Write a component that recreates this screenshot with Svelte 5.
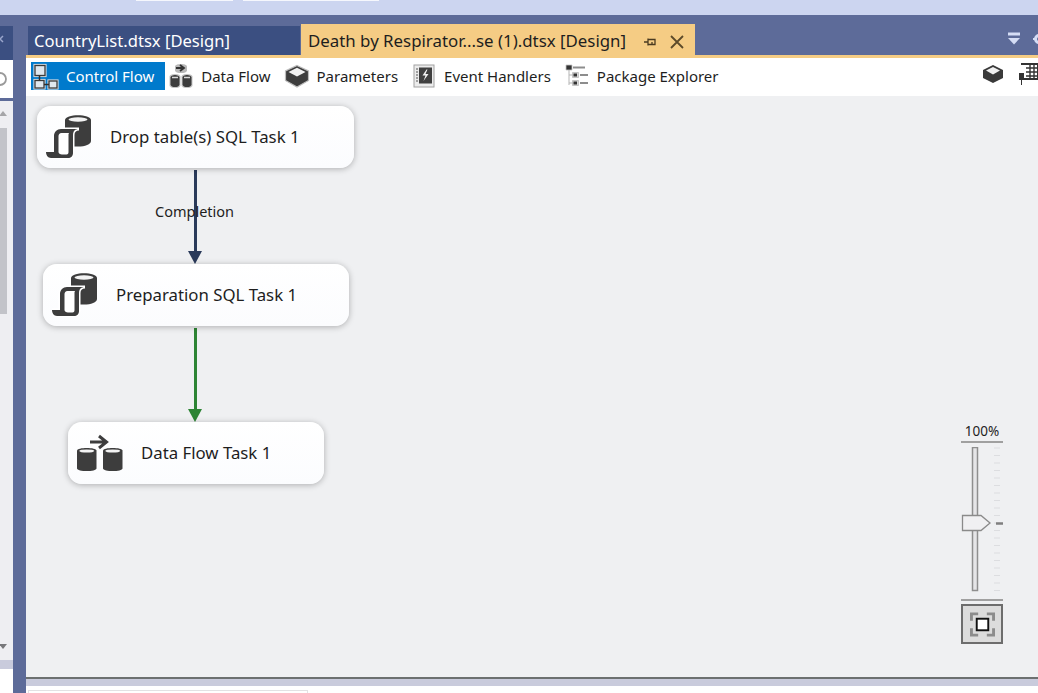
<script>
  const tabs = [
    { label: 'Control Flow', icon: 'control', active: true },
    { label: 'Data Flow', icon: 'data' },
    { label: 'Parameters', icon: 'param' },
    { label: 'Event Handlers', icon: 'event' },
    { label: 'Package Explorer', icon: 'explorer' }
  ];
  const nodes = [
    { label: 'Drop table(s) SQL Task 1', kind: 'sql', x: 37, y: 106, w: 317, text: 73 },
    { label: 'Preparation SQL Task 1', kind: 'sql', x: 43, y: 264, w: 306, text: 73 },
    { label: 'Data Flow Task 1', kind: 'flow', x: 68, y: 422, w: 256, text: 73 }
  ];
  const ticks = Array.from({ length: 20 }, (_, i) => 1 + i * 7.5);
</script>

{#snippet drum(x, y, w, h, fill)}
  <path d="M{x} {y + 2.5}c0-3.4 {w}-3.4 {w} 0v{h - 5}c0 3.4-{w} 3.4-{w} 0z" fill={fill} />
{/snippet}

{#snippet tabIcon(icon)}
  {#if icon === 'control'}
    <svg width="28" height="27" viewBox="0 0 28 27">
      <g fill="none" stroke="#d9dde2" stroke-width="3.2">
        <rect x="3" y="2.500" width="10" height="10" />
        <rect x="3" y="17.500" width="9" height="7.500" />
        <rect x="17" y="18" width="8" height="7" />
      </g>
      <g fill="#dfe7ee" stroke="#3a3a3a" stroke-width="1.300">
        <rect x="3" y="2.500" width="10" height="10" />
        <rect x="3" y="17.500" width="9" height="7.500" />
        <rect x="17" y="18" width="8" height="7" />
      </g>
      <path d="M7.500 12.500v5M12 21.500h5" stroke="#2f2f2f" stroke-width="1.500" />
    </svg>
  {:else if icon === 'data'}
    <svg width="26" height="26" viewBox="0 0 26 26">
      {@render drum(7, 1, 12, 9, '#b9b9b9')}
      <path d="M8 5h7M12 2l4 3-4 3" fill="none" stroke="#333" stroke-width="1.800" />
      {@render drum(1.500, 11, 11, 14, '#c4c4c4')}
      {@render drum(13.500, 11, 11, 14, '#c4c4c4')}
      {@render drum(2.500, 12, 9, 12, '#3c3c3c')}
      {@render drum(14.500, 12, 9, 12, '#3c3c3c')}
      <path d="M4 14.500h6M16 14.500h6" stroke="#d8d8d8" stroke-width="1.500" />
    </svg>
  {:else if icon === 'param'}
    <svg width="26" height="24" viewBox="0 0 26 24">
      <path d="M13 1.500l11.500 5.500v9.500L13 23 1.500 16.500V7z" fill="#3d3d3d" stroke="#bcbcbc" stroke-width="1.200" />
      <path d="M13 3.800l8.500 4.200L13 12.500 4.500 8z" fill="#f1f1f1" />
    </svg>
  {:else if icon === 'event'}
    <svg width="22" height="24" viewBox="0 0 22 24">
      <rect x="1" y="1" width="20" height="22" fill="#ececec" stroke="#a2a2a2" />
      <rect x="6" y="3.500" width="13" height="16" fill="#404040" />
      <path d="M3 5h2M3 8h2M3 11h2M3 14h2M3 17h2" stroke="#555" />
      <path d="M13.500 5.500l-4 6h3l-2 5.500 5-7h-3l2-4.500z" fill="#f2f2f2" />
    </svg>
  {:else}
    <svg width="24" height="24" viewBox="0 0 24 24">
      <path d="M1 1h6v5H1z" fill="#333" stroke="#c5c5c5" stroke-width="0.800" />
      <path d="M8 3.500h12" stroke="#8d8d8d" stroke-width="2" />
      <path d="M4 6v15M4 11h4M4 19h4" stroke="#b5b5b5" stroke-width="1" fill="none" />
      <path d="M7.500 8.500h6v5h-6zM7.500 16.500h6v5h-6z" fill="#d8d8d8" stroke="#aaa" stroke-width="0.600" />
      <path d="M8.500 9.500h3.500v3H8.500zM8.500 17.500h3.500v3H8.500z" fill="#333" />
      <path d="M15 11h8M15 19h8" stroke="#8d8d8d" stroke-width="2" />
    </svg>
  {/if}
{/snippet}

{#snippet nodeIcon(kind)}
  {#if kind === 'sql'}
    <svg width="46" height="44" viewBox="0 0 46 44">
      <path d="M19 5c0-6.500 26-6.500 26 0v21c0 3.500-6 5.500-13 5.500H19z" fill="#3d3d3d" />
      <ellipse cx="32" cy="4.500" rx="9.500" ry="2.200" fill="#f3f3f3" />
      <path d="M8 37V21c0-4 3-7 7-7h18c-4 0-6 2-6 6v18c0 3-2 5-5 5H5c-3 0-5-3-5-6z" fill="#3d3d3d" stroke="#fff" stroke-width="3" paint-order="stroke" />
      <path d="M12.500 37V21c0-1.500 1-3 3-3H23c-.5 1-.5 1.500-.5 2.500V37c0 1.500-.5 2.500-2 2.500H16c-2 0-3.500-1-3.500-2.500z" fill="#fff" />
    </svg>
  {:else}
    <svg width="46" height="42" viewBox="0 0 46 42">
      <path d="M13 11h16M22 5l7.500 6-7.500 6" fill="none" stroke="#3d3d3d" stroke-width="3" />
      {@render drum(0, 17, 19.500, 23, '#3d3d3d')}
      {@render drum(26, 17, 19.500, 23, '#3d3d3d')}
      <ellipse cx="9.750" cy="20" rx="7.500" ry="1.600" fill="#f3f3f3" />
      <ellipse cx="35.750" cy="20" rx="7.500" ry="1.600" fill="#f3f3f3" />
    </svg>
  {/if}
{/snippet}

<div class="window">
  <header class="topbar">
    <span class="chip chip-a"></span>
    <span class="chip chip-b"></span>
  </header>

  <div class="workspace">
    <aside class="side">
      <div class="side-head">
        <svg width="13" height="34" viewBox="0 0 13 34">
          <path d="M-3 10l6 6M3 10l-6 6" stroke="#9aa6cc" stroke-width="1.500" />
        </svg>
      </div>
      <div class="side-search">
        <svg width="13" height="20" viewBox="0 0 13 20">
          <circle cx="0" cy="10" r="6" fill="none" stroke="#9a9a9a" stroke-width="1.800" />
        </svg>
      </div>
      <div class="side-list">
        <div class="scroll-up"></div>
        <div class="scroll-thumb"></div>
        <div class="scroll-down"></div>
      </div>
      <div class="side-foot"></div>
      <div class="side-rest"></div>
    </aside>

    <main class="doc">
      <div class="tabstrip">
        <div class="doc-tab">CountryList.dtsx [Design]</div>
        <div class="doc-tab current">
          <span>Death by Respirator...se (1).dtsx [Design]</span>
          <svg class="pin" width="14" height="14" viewBox="0 0 14 14">
            <path d="M1 7h4M5 3.500v7M5 4.500h7v5H5M9 9.500V7" fill="none" stroke="#4a3a20" stroke-width="1.300" />
          </svg>
          <svg class="close" width="16" height="16" viewBox="0 0 16 16">
            <path d="M2 2l12 12M14 2L2 14" stroke="#5c4a2a" stroke-width="1.800" />
          </svg>
        </div>
        <div class="strip-tools">
          <svg width="14" height="14" viewBox="0 0 14 14">
            <path d="M1 2h12" stroke="#d5ddf5" stroke-width="3" />
            <path d="M1 6h12l-6 6.500z" fill="#d5ddf5" />
          </svg>
          <svg width="5" height="12" viewBox="0 0 5 12">
            <circle cx="6" cy="6" r="3.500" fill="none" stroke="#d5ddf5" stroke-width="3" />
            <path d="M6 0v12M0 6h3" stroke="#d5ddf5" stroke-width="2" />
          </svg>
        </div>
      </div>
      <div class="accent"></div>

      <nav class="toolbar">
        {#each tabs as tab}
          <div class="tool" class:active={tab.active}>
            <span class="tool-icon">{@render tabIcon(tab.icon)}</span>
            <span class="tool-text">{tab.label}</span>
          </div>
        {/each}
        <div class="toolbar-end">
          <svg width="22" height="20" viewBox="0 0 22 20">
            <path d="M11 1l10 5v8l-10 5-10-5V6z" fill="#3a3a3a" />
            <path d="M11 3l7 3.500-7 4-7-4z" fill="#f1f1f1" />
          </svg>
          <svg width="20" height="24" viewBox="0 0 20 24">
            <path d="M3 2h17v15H6" fill="none" stroke="#333" stroke-width="2" />
            <path d="M8 6h12M8 10h12M8 14h12M12 3v14M16 3v14" stroke="#333" stroke-width="1.400" />
            <path d="M1 11h5v7H4v5H3v-5H1z" fill="#333" />
          </svg>
        </div>
      </nav>

      <section class="canvas">
        <div class="link dark"></div>
        <div class="head dark-head"></div>
        <div class="link-label">Completion</div>
        <div class="link green"></div>
        <div class="head green-head"></div>

        {#each nodes as node}
          <div class="node" style="left:{node.x}px;top:{node.y - 96}px;width:{node.w}px">
            <span class="node-icon">{@render nodeIcon(node.kind)}</span>
            <span class="node-label" style="left:{node.text}px">{node.label}</span>
          </div>
        {/each}

        <div class="zoom">
          <div class="zoom-value">100%</div>
          <svg class="zoom-rail" width="42" height="145" viewBox="0 0 42 145">
            {#each ticks as t}
              <path d="M33 {t}h6" stroke="#dcdde0" />
            {/each}
            <rect x="11.500" y="0.500" width="5" height="143" fill="#e5e5e7" stroke="#8e8e8e" stroke-width="1.500" />
            <path d="M1.500 68.500H20l9 7.500-9 7.500H1.500z" fill="#f0f0f2" stroke="#8a8a8a" stroke-width="1.300" />
            <path d="M35 76.500h7" stroke="#7f7f7f" stroke-width="2.500" />
          </svg>
          <div class="zoom-sep"></div>
          <button class="fit" aria-label="Zoom to fit">
            <svg width="25" height="25" viewBox="0 0 26 26">
              <path d="M1.500 9V2h7M17.500 2h7v7M24.500 17v7h-7M8.500 24h-7v-7" fill="none" stroke="#8c8c8c" stroke-width="3" />
              <rect x="7" y="7" width="12" height="12" fill="#fff" stroke="#111" stroke-width="2" />
            </svg>
          </button>
        </div>
      </section>

      <div class="splitter"></div>
      <div class="lower"><div class="lower-box"></div></div>
    </main>
  </div>
</div>

<style>
  :global(body) { margin: 0; }

  .window {
    width: 1038px;
    height: 693px;
    overflow: hidden;
    display: flex;
    flex-direction: column;
    background: #5d6b99;
    font-family: "Noto Sans", "Open Sans", sans-serif;
  }

  .topbar {
    height: 15px;
    flex: none;
    background: #ccd5f0;
    display: flex;
    gap: 10px;
    padding-left: 136px;
    box-sizing: border-box;
  }
  .chip { height: 1px; background: #f5f7fd; }
  .chip-a { width: 97px; }
  .chip-b { width: 136px; }

  .workspace { flex: 1; display: flex; gap: 13px; min-height: 0; }

  .side { width: 13px; flex: none; padding-top: 11px; display: flex; flex-direction: column; }
  .side-head { height: 34px; background: #3b4f81; flex: none; }
  .side-head svg { display: block; }
  .side-search { height: 38px; background: #fff; flex: none; display: flex; align-items: center; }
  .side-list {
    margin-top: 3px;
    height: 559px;
    flex: none;
    background: #eeeef2;
    position: relative;
  }
  .scroll-thumb { position: absolute; left: 0; top: 27px; width: 7px; height: 186px; background: #c2c3c9; }
  .scroll-up, .scroll-down { position: absolute; width: 0; height: 0; border-left: 4px solid transparent; border-right: 4px solid transparent; }
  .scroll-up { top: 10px; left: -1px; border-bottom: 5px solid #a5a5a8; }
  .scroll-down { top: 543px; left: -1px; border-top: 5px solid #77777b; }
  .side-foot { height: 9px; background: #c9cbdc; flex: none; }
  .side-rest { flex: 1; background: #fff; }

  .doc { flex: 1; min-width: 0; display: flex; flex-direction: column; }

  .tabstrip { height: 40px; flex: none; display: flex; align-items: flex-end; padding-left: 2px; }
  .doc-tab {
    width: 272px;
    height: 29px;
    flex: none;
    box-sizing: border-box;
    padding: 2px 0 0 6px;
    background: #3b4f81;
    color: #fff;
    font-size: 16.600px;
    line-height: 26px;
    white-space: nowrap;
  }
  .doc-tab.current {
    width: 394px;
    height: 31px;
    margin-left: 1px;
    padding: 4px 0 0 7px;
    background: #f5cc84;
    color: #1e1e1e;
    position: relative;
    font-size: 16.850px;
  }
  .pin { position: absolute; left: 342px; top: 11px; }
  .close { position: absolute; left: 368px; top: 10px; }
  .strip-tools { margin-left: auto; align-self: flex-end; display: flex; align-items: center; gap: 12px; padding-bottom: 9px; }

  .accent { height: 3px; flex: none; background: #f5cc84; }

  .toolbar {
    height: 38px;
    flex: none;
    background: #fff;
    display: flex;
    align-items: flex-start;
    padding: 4px 0 0 5px;
    box-sizing: border-box;
    color: #1e1e1e;
    font-size: 15px;
  }
  .tool { display: flex; align-items: center; gap: 6px; height: 28px; padding-right: 12px; white-space: nowrap; }
  .tool.active { background: #007acc; color: #fff; padding-right: 11px; margin-right: 2px; }
  .tool-icon { display: flex; width: 28px; justify-content: center; }
  .tool.active .tool-icon { width: 29px; }
  .tool-text { line-height: 20px; padding-bottom: 1px; }
  .toolbar-end { margin-left: auto; display: flex; align-items: center; gap: 14px; margin-right: 0; }

  .canvas { flex: none; height: 581px; background: #eff0f2; position: relative; }

  .node {
    position: absolute;
    height: 62px;
    margin-left: -26px;
    background: linear-gradient(#fff, #fbfcfe);
    border-radius: 14px;
    box-shadow: 0 1px 6px rgba(0, 0, 0, 0.28);
    color: #1e1e1e;
    font-size: 16.800px;
  }
  .node-icon { position: absolute; left: 9px; top: 9px; display: flex; }
  .node-label { position: absolute; top: 0; line-height: 62px; white-space: nowrap; }

  .link { position: absolute; width: 3px; left: 168px; }
  .link.dark { top: 74px; height: 85px; background: #2a3a5a; }
  .link.green { top: 232px; height: 86px; background: #2d8434; }
  .head {
    position: absolute;
    left: 162px;
    width: 0;
    height: 0;
    border-left: 7.500px solid transparent;
    border-right: 7.500px solid transparent;
  }
  .dark-head { top: 155px; border-top: 13px solid #2a3a5a; }
  .green-head { top: 313px; border-top: 13px solid #2d8434; }
  .link-label {
    position: absolute;
    left: 129px;
    top: 105px;
    font-size: 14.500px;
    line-height: 20px;
    color: #1e1e1e;
    white-space: nowrap;
  }

  .zoom {
    position: absolute;
    right: 35px;
    top: 325px;
    width: 42px;
    display: flex;
    flex-direction: column;
    align-items: center;
  }
  .zoom-value {
    width: 100%;
    text-align: center;
    font-size: 13.500px;
    line-height: 20px;
    color: #1e1e1e;
    border-bottom: 2px solid #a0a0a0;
    margin-bottom: 4px;
  }
  .zoom-rail { display: block; }
  .zoom-sep { width: 100%; height: 2px; margin: 7px 0 3px; background: #a0a0a0; flex: none; }
  .fit {
    width: 42px;
    height: 40px;
    padding: 0;
    box-sizing: border-box;
    border: 2px solid #6d6d6d;
    border-radius: 0;
    background: #dcdcdc;
    display: flex;
    align-items: center;
    justify-content: center;
  }

  .splitter { height: 9px; flex: none; background: #c9cbdc; border-top: 2px solid #6c7070; box-sizing: border-box; }
  .lower { flex: 1; background: #fff; padding: 4px 0 0 2px; }
  .lower-box { width: 280px; height: 20px; border: 1px solid #e2e2e4; box-sizing: border-box; }
</style>
